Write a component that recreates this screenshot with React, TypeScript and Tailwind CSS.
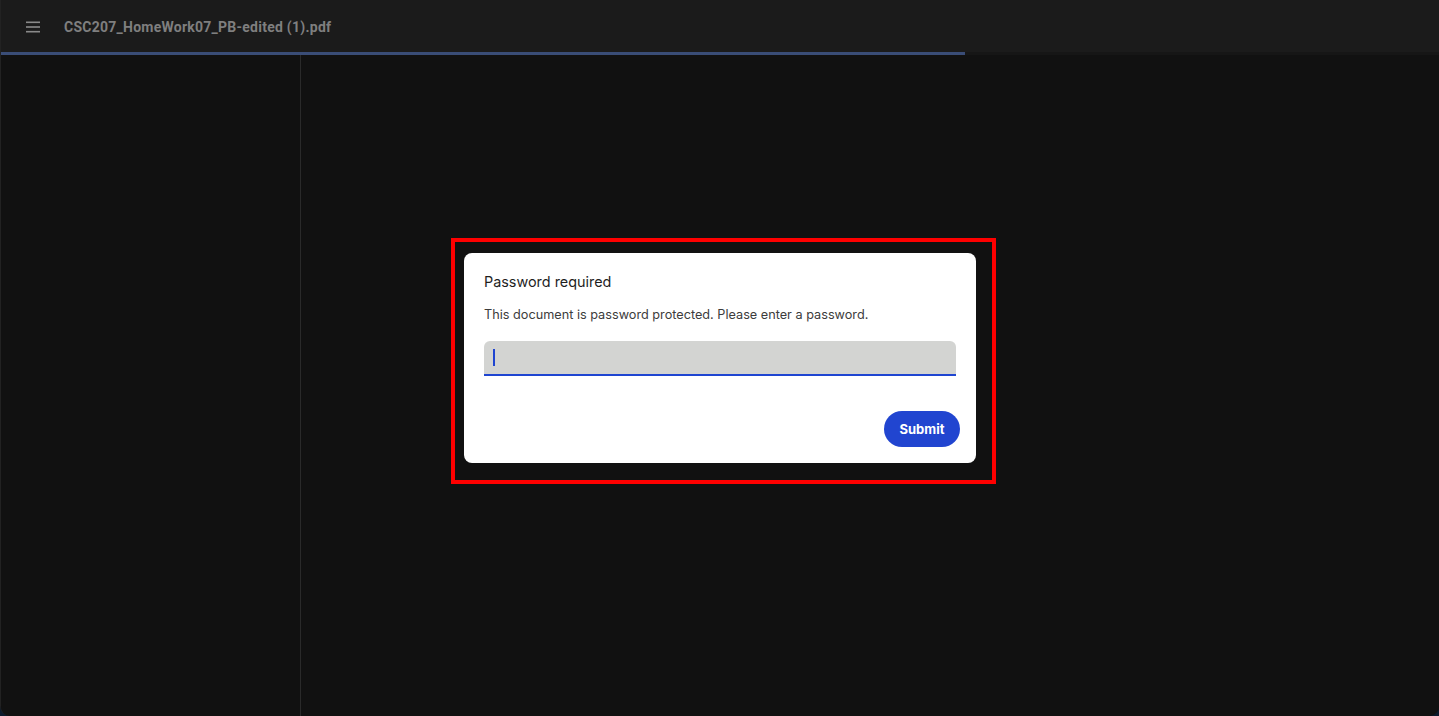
import React, { useState } from "react";

const FILE_NAME = "CSC207_HomeWork07_PB-edited (1).pdf";

const MenuIcon: React.FC = () => (
  <svg width="16" height="12" viewBox="0 0 16 12" className="text-[#8a8a8a]">
    <rect x="1" y="0.5" width="14" height="1.6" fill="currentColor" />
    <rect x="1" y="5.2" width="14" height="1.6" fill="currentColor" />
    <rect x="1" y="9.9" width="14" height="1.6" fill="currentColor" />
  </svg>
);

const PasswordDialog: React.FC = () => {
  const [password, setPassword] = useState("");

  return (
    // red annotation frame around the modal
    <div className="absolute left-[451px] top-[238px] border-4 border-[#ff0000] pl-[9px] pt-[11px] pr-[16px] pb-[17px]">
      <div
        className="w-[512px] h-[210px] bg-white rounded-[8px] flex flex-col pl-5 pr-4 pt-5 pb-4"
        style={{ fontFamily: "Inter, Roboto, sans-serif" }}
      >
        <h2 className="text-[14.4px] leading-4 text-[#1f1f1f] mt-[1px]">Password required</h2>
        <p className="mt-[17px] text-[12.7px] leading-4 text-[#3c3c3c]">
          This document is password protected. Please enter a password.
        </p>
        <div className="mt-[18px] w-[472px] h-[35px] bg-[#d3d4d2] rounded-t-[6px] border-b-2 border-[#1f45d1] flex items-center px-[9px]">
          <span className="w-[1.5px] h-[17px] bg-[#1f45d1]" />
          <input
            type="password"
            value={password}
            onChange={(e) => setPassword(e.target.value)}
            className="flex-1 bg-transparent outline-none text-[13px] caret-transparent"
          />
        </div>
        <div className="mt-auto flex justify-end">
          <button className="w-[76px] h-[36px] rounded-full bg-[#2145d0] text-white text-[13px] font-bold pt-[1px]">
            Submit
          </button>
        </div>
      </div>
    </div>
  );
};

const App: React.FC = () => {
  return (
    <div
      className="relative w-[1439px] h-[716px] bg-[#0c1a2c] overflow-hidden"
      style={{ fontFamily: "Roboto, 'Noto Sans', sans-serif" }}
    >
      <div className="w-full h-full flex flex-col bg-[#111111] rounded-b-[10px] border-l border-[#222222] overflow-hidden">
        {/* Top bar */}
        <div className="h-[52px] bg-[#1b1b1b] flex items-center shrink-0 pt-[2px]">
          <div className="w-[63px] flex justify-center">
            <MenuIcon />
          </div>
          <span className="text-[14px] font-bold text-[#7f7f7f] tracking-[0.25px]">{FILE_NAME}</span>
        </div>
        {/* Load progress */}
        <div className="h-[3px] bg-[#161616] shrink-0">
          <div className="h-full w-[964px] bg-[#3a4d77]" />
        </div>
        {/* Body */}
        <div className="flex-1 flex">
          <div className="w-[300px] border-r border-[#2a2a2a] bg-[#111111]" />
          <div className="flex-1 bg-[#111111]" />
        </div>
      </div>
      <PasswordDialog />
    </div>
  );
};

export default App;
